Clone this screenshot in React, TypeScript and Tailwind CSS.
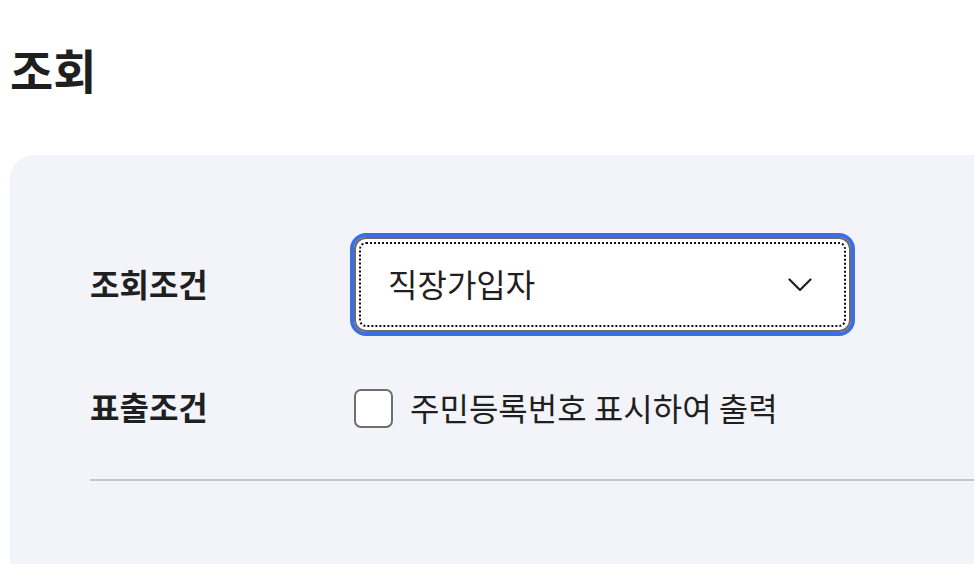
import React from "react";

export default function App() {
  const font = { fontFamily: '"Noto Sans CJK KR", "Noto Sans", sans-serif' };
  return (
    <div className="min-h-[564px] w-[974px] overflow-hidden bg-white pl-[10px] text-[#1f1f1f]" style={font}>
      <h1 className="pt-[37px] text-[47px] font-bold leading-[64px]">조회</h1>
      <div className="mt-[54px] h-[420px] rounded-tl-[24px] bg-[#f3f4f9] pl-[80px] pt-[78px]">
        <div className="flex items-center">
          <div className="w-[260px] pb-[4px] text-[32px] font-bold leading-[40px]">조회조건</div>
          <div className="h-[103px] w-[505px] rounded-[16px] border-4 border-[#3b6de3]">
            <div className="h-full w-full rounded-[12px] border-2 border-[#6b6b6b] bg-white p-[3px]">
              <div className="flex h-full w-full items-center justify-between rounded-[7px] border-2 border-dotted border-[#111] pl-[27px] pr-[32px]">
                <span className="pb-[3px] text-[32px] leading-[40px]">직장가입자</span>
                <svg width="24" height="14" viewBox="0 0 24 14" fill="none">
                  <path d="M1.5 1.5 L12 12 L22.5 1.5" stroke="#222" strokeWidth="2.2" strokeLinecap="round" strokeLinejoin="round" />
                </svg>
              </div>
            </div>
          </div>
        </div>
        <div className="mt-[50px] flex items-center">
          <div className="w-[264px] pb-[4px] text-[32px] font-bold leading-[40px]">표출조건</div>
          <div className="flex items-center">
            <div className="h-[39px] w-[39px] rounded-[7px] border-2 border-[#6e6e6e] bg-white" />
            <span className="ml-[17px] pb-[2px] text-[32px] leading-[40px]">주민등록번호 표시하여 출력</span>
          </div>
        </div>
        <div className="mt-[49px] h-[2px] bg-[#c6c6ca]" />
      </div>
    </div>
  );
}
